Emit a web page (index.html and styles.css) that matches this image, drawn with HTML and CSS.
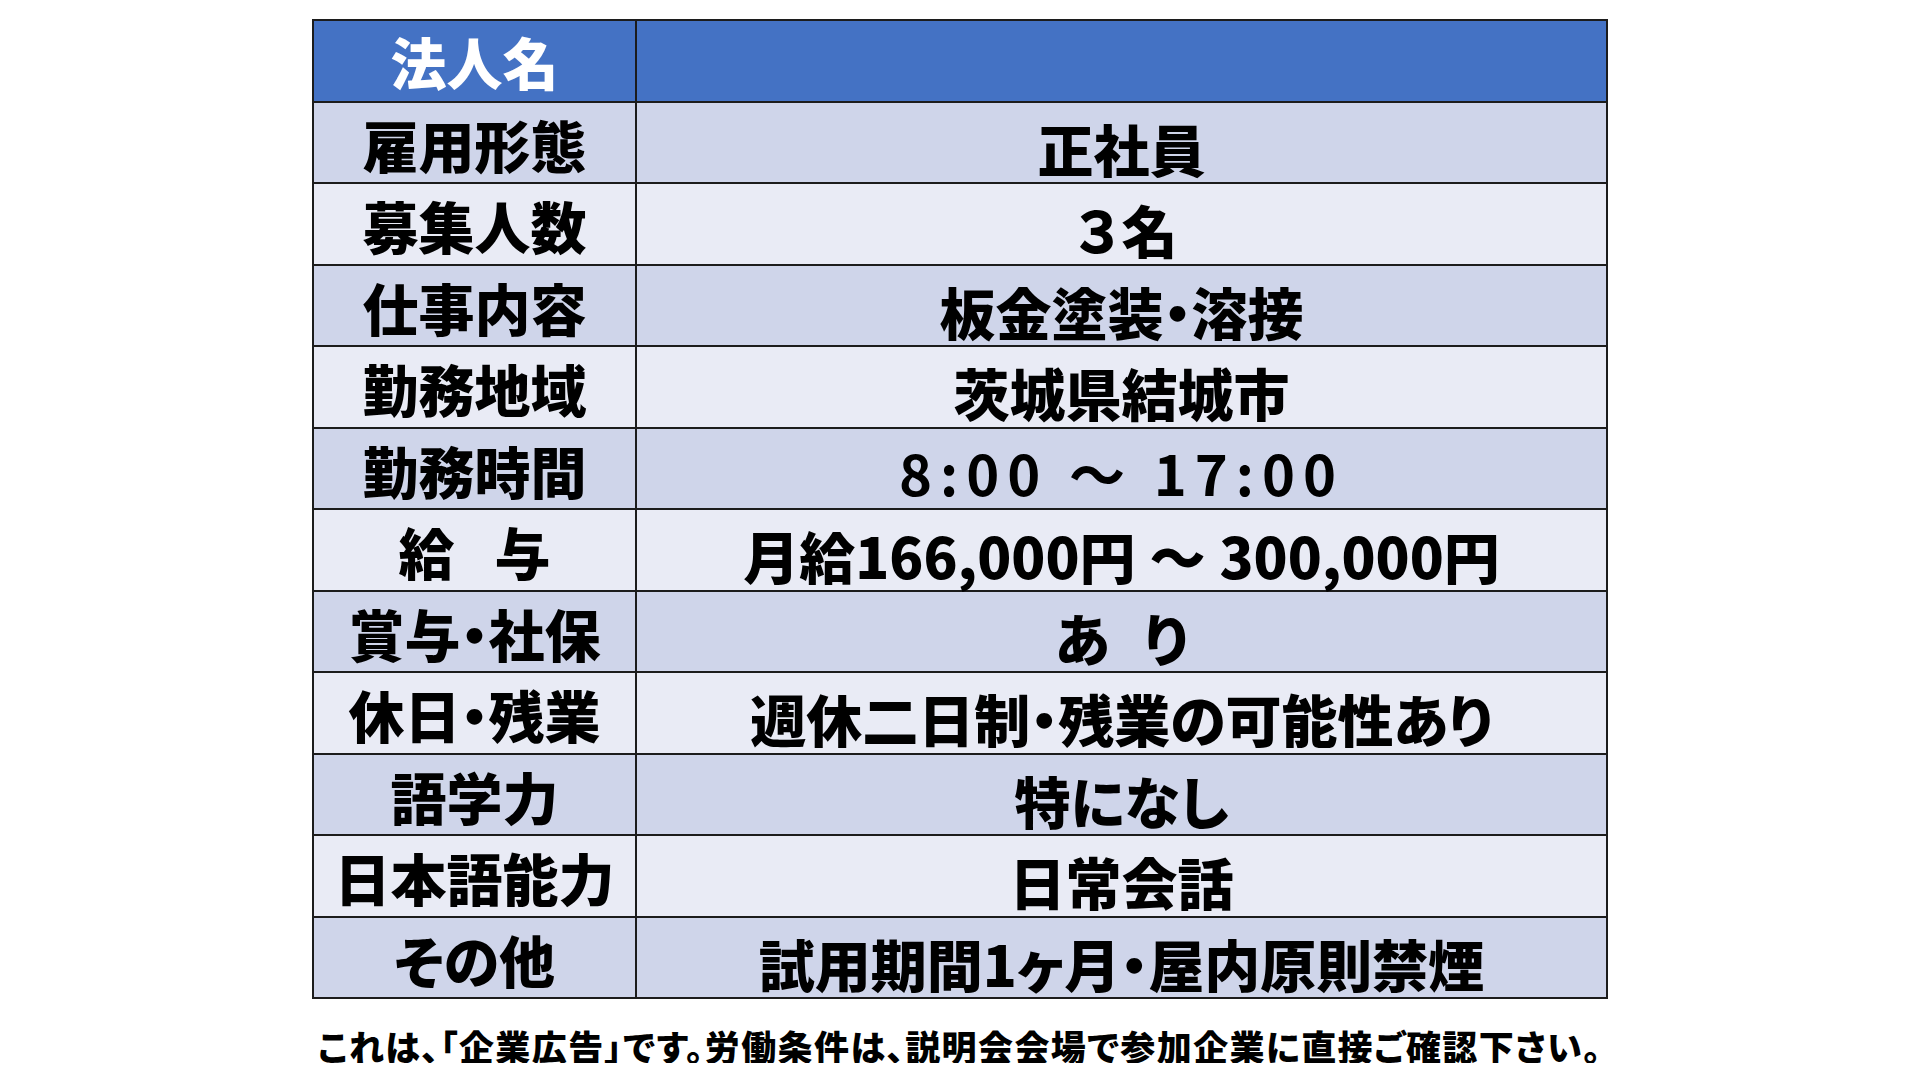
FILE: index.html
```html
<!DOCTYPE html>
<html lang="ja">
<head>
<meta charset="utf-8">
<title>求人票</title>
<link rel="stylesheet" href="styles.css">
</head>
<body>
<main class="page">
  <div class="sheet">
    <div class="cell head label">法人名</div>
    <div class="cell head value"></div>

    <div class="cell dark label">雇用形態</div>
    <div class="cell dark value">正社員</div>

    <div class="cell light label">募集人数</div>
    <div class="cell light value wide">３名</div>

    <div class="cell dark label">仕事内容</div>
    <div class="cell dark value">板金塗装・溶接</div>

    <div class="cell light label">勤務地域</div>
    <div class="cell light value">茨城県結城市</div>

    <div class="cell dark label">勤務時間</div>
    <div class="cell dark value time">8:00 ～ 17:00</div>

    <div class="cell light label">給<span class="gap"></span>与</div>
    <div class="cell light value pay"><span>月給166,000円</span><span class="tilde">～</span><span>300,000円</span></div>

    <div class="cell dark label">賞与・社保</div>
    <div class="cell dark value">あ<span class="gap-s"></span>り</div>

    <div class="cell light label">休日・残業</div>
    <div class="cell light value">週休二日制・残業の可能性あり</div>

    <div class="cell dark label">語学力</div>
    <div class="cell dark value">特になし</div>

    <div class="cell light label">日本語能力</div>
    <div class="cell light value">日常会話</div>

    <div class="cell dark label">その他</div>
    <div class="cell dark value">試用期間1ヶ月・屋内原則禁煙</div>
  </div>
  <p class="note">これは、「企業広告」です。労働条件は、説明会会場で参加企業に直接ご確認下さい。</p>
</main>
</body>
</html>
```

FILE: styles.css
```css
html, body {
  margin: 0;
  padding: 0;
  background: #ffffff;
}

body {
  font-family: "Noto Sans CJK JP", "Noto Sans", sans-serif;
  color: #000000;
}

.page {
  width: 1296px;
  margin: 0 auto;
  padding-top: 19px;
}

.sheet {
  box-sizing: border-box;
  width: 1296px;
  height: 980px;
  display: grid;
  grid-template-columns: 321px 1fr;
  grid-template-rows: repeat(12, 1fr);
  gap: 2px;
  padding: 2px;
  background: #1c1c1c;
}

.cell {
  box-sizing: border-box;
  display: flex;
  align-items: center;
  justify-content: center;
  font-size: 56px;
  font-weight: 900;
  line-height: 1;
  white-space: nowrap;
  font-feature-settings: "palt";
}

.label {
  padding-top: 3px;
}

.value {
  padding-top: 11px;
}

.head {
  background: #4472c4;
  color: #ffffff;
  padding-top: 1px;
}

.dark {
  background: #cfd5ea;
}

.light {
  background: #e9ebf5;
}

.wide {
  font-feature-settings: normal;
  letter-spacing: -4px;
}

.time {
  font-weight: 700;
  letter-spacing: 8px;
  padding-top: 7px;
}

.pay {
  letter-spacing: 0;
}

.tilde {
  margin: 0 14px;
  font-feature-settings: normal;
}

.gap {
  display: inline-block;
  width: 40px;
}

.gap-s {
  display: inline-block;
  width: 34px;
}

.note {
  margin: 29px 0 0;
  text-align: center;
  font-size: 35px;
  font-weight: 900;
  line-height: 1;
  letter-spacing: 1.4px;
  white-space: nowrap;
  font-feature-settings: "palt";
}
```
